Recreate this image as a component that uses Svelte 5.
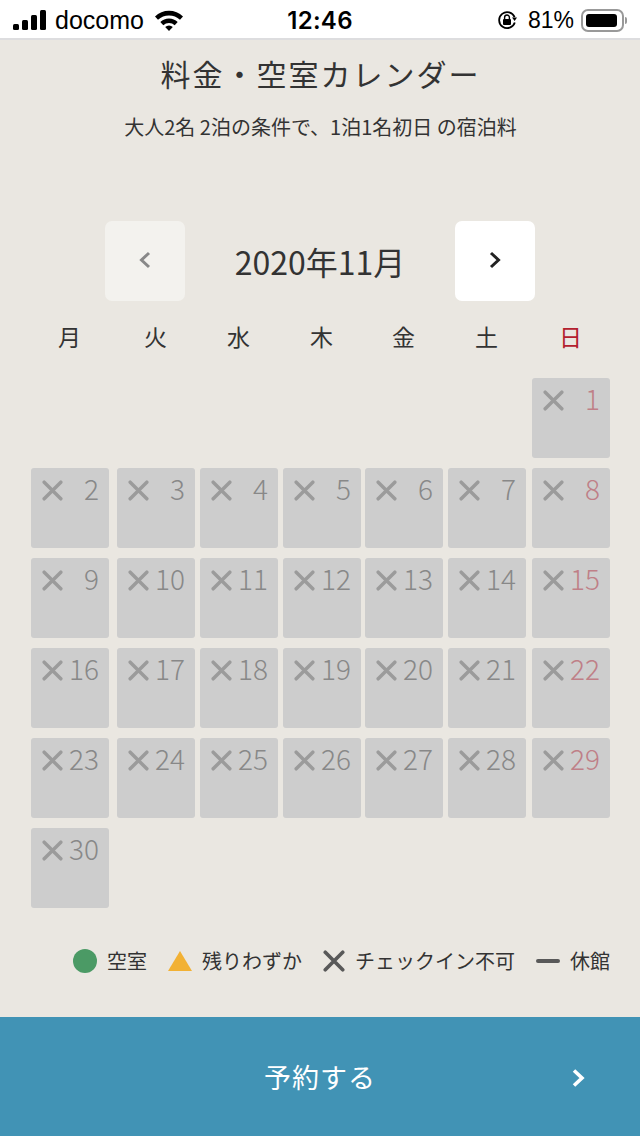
<script>
	const weekdays = ['月', '火', '水', '木', '金', '土', '日']
	const days = Array.from({ length: 30 }, (_, i) => i + 1)
</script>

{#snippet cross(size, color)}
	<svg class="cross" width={size} height={size} viewBox="0 0 24 24">
		<path d="M2.5 2.5 L21.5 21.5 M21.5 2.5 L2.5 21.5" fill="none" stroke={color} stroke-width="4" stroke-linecap="round" />
	</svg>
{/snippet}

{#snippet chevron(color, width, d = 'M3 2.5 L11 10 L3 17.5')}
	<svg width="14" height="20" viewBox="0 0 14 20">
		<path {d} fill="none" stroke={color} stroke-width={width} />
	</svg>
{/snippet}

<div class="page">
	<header class="status">
		<div class="status-left">
			<svg width="35" height="20" viewBox="0 0 35 20">
				<rect x="0" y="14" width="6" height="6" rx="1.5" fill="#000" />
				<rect x="9" y="10" width="6" height="10" rx="1.5" fill="#000" />
				<rect x="18" y="5" width="6" height="15" rx="1.5" fill="#000" />
				<rect x="27" y="0" width="6" height="20" rx="1.5" fill="#000" />
			</svg>
			<span class="carrier">docomo</span>
			<svg class="wifi" width="30" height="22" viewBox="0 0 30 22">
				<path d="M1 7.5 A20 20 0 0 1 29 7.5 L26 10.8 A16 16 0 0 0 4 10.8 Z" fill="#000" />
				<path d="M6.3 13 A12.5 12.5 0 0 1 23.7 13 L20.7 16.2 A8.3 8.3 0 0 0 9.3 16.2 Z" fill="#000" />
				<path d="M11.2 18 A5.5 5.5 0 0 1 18.8 18 L15 22 Z" fill="#000" />
			</svg>
		</div>
		<div class="time">12:46</div>
		<div class="status-right">
			<svg width="20" height="20" viewBox="0 0 20 20">
				<path d="M17.6 7.2 A8 8 0 1 0 17.8 12.5" fill="none" stroke="#000" stroke-width="1.8" />
				<path d="M15 7.5 L20 7.5 L17.6 11 Z" fill="#000" />
				<rect x="6" y="9" width="8" height="6" rx="1" fill="#000" />
				<path d="M7.6 9 V7.4 a2.4 2.4 0 0 1 4.8 0 V9" fill="none" stroke="#000" stroke-width="1.4" />
			</svg>
			<span class="percent">81%</span>
			<div class="battery"><div class="battery-fill"></div></div>
			<div class="battery-tip"></div>
		</div>
	</header>

	<main class="main">
		<h1 class="title">料金・空室カレンダー</h1>
		<p class="subtitle">大人2名 2泊の条件で、1泊1名初日 の宿泊料</p>

		<div class="month-nav">
			<button class="nav-btn prev">{@render chevron('#888888', 3, 'M11 3 L3.5 10 L11 17')}</button>
			<div class="month">2020年11月</div>
			<button class="nav-btn next">{@render chevron('#222222', 3, 'M3 3 L10.5 10 L3 17')}</button>
		</div>

		<div class="grid weekdays">
			{#each weekdays as day, i}
				<div class="weekday" class:sun={i === 6}>{day}</div>
			{/each}
		</div>

		<div class="grid calendar">
			{#each Array(6) as _}
				<div></div>
			{/each}
			{#each days as day}
				<div class="cell">
					{@render cross(21, '#9b9b9b')}
					<span class="num" class:sun={day % 7 === 1}>{day}</span>
				</div>
			{/each}
		</div>

		<div class="legend">
			<div class="legend-item">
				<span class="dot"></span>
				<span>空室</span>
			</div>
			<div class="legend-item">
				<svg width="24" height="20" viewBox="0 0 24 20"><path d="M12 0 L24 20 L0 20 Z" fill="#f2b134" /></svg>
				<span>残りわずか</span>
			</div>
			<div class="legend-item">
				{@render cross(22, '#595959')}
				<span>チェックイン不可</span>
			</div>
			<div class="legend-item">
				<span class="dash"></span>
				<span>休館</span>
			</div>
		</div>
	</main>

	<button class="reserve">
		<span>予約する</span>
		<span class="reserve-icon">{@render chevron('#ffffff', 3.6)}</span>
	</button>
</div>

<style>
	:global(body) {
		margin: 0;
		background: #eae7e1;
	}

	.page {
		display: flex;
		flex-direction: column;
		height: 1136px;
		overflow: hidden;
		font-family: 'Noto Sans CJK JP', 'Noto Sans', sans-serif;
		color: #2b2b2b;
	}

	.status {
		box-sizing: border-box;
		display: grid;
		grid-template-columns: 1fr auto 1fr;
		align-items: center;
		height: 40px;
		padding: 2px 13px 0;
		background: #fff;
		border-bottom: 2px solid #dddddf;
		font-family: 'Inter', 'Liberation Sans', sans-serif;
		color: #000;
	}

	.status-left,
	.status-right {
		display: flex;
		align-items: center;
	}

	.status-right {
		justify-content: flex-end;
	}

	.carrier {
		margin-left: 7px;
		font-size: 25px;
		font-family: 'Liberation Sans', sans-serif;
	}

	.wifi {
		margin-left: 10px;
	}

	.time {
		font-size: 24px;
		font-weight: 600;
		letter-spacing: 0.3px;
	}

	.percent {
		margin-left: 11px;
		font-size: 23px;
		font-family: 'Liberation Sans', sans-serif;
	}

	.battery {
		box-sizing: border-box;
		width: 43px;
		height: 23px;
		margin-left: 7px;
		padding: 3px;
		border: 2px solid #999;
		border-radius: 7px;
	}

	.battery-fill {
		width: 31px;
		height: 13px;
		background: #000;
		border-radius: 3px;
	}

	.battery-tip {
		width: 2px;
		height: 7px;
		margin-left: 1px;
		background: #999;
		border-radius: 0 2px 2px 0;
	}

	.main {
		flex: 1;
		box-sizing: border-box;
		padding: 0 30px 0 31px;
	}

	.title {
		margin: 10px 0 0;
		font-size: 30px;
		font-weight: 400;
		line-height: 46px;
		letter-spacing: 2px;
		text-align: center;
		color: #333;
	}

	.subtitle {
		margin: 17px 0 0;
		font-size: 20px;
		line-height: 28px;
		text-align: center;
		color: #333;
	}

	.month-nav {
		display: flex;
		align-items: center;
		justify-content: space-between;
		width: 430px;
		margin: 80px 0 0 74px;
	}

	.nav-btn {
		display: flex;
		align-items: center;
		justify-content: center;
		width: 80px;
		height: 80px;
		padding: 0 0 2px;
		border: 0;
		border-radius: 7px;
	}

	.nav-btn.prev {
		background: #f3f2ee;
	}

	.nav-btn.next {
		background: #fff;
	}

	.month {
		font-size: 32px;
		line-height: 80px;
		color: #333;
	}

	.grid {
		display: grid;
		grid-template-columns: 86px 83px 83px 82px 83px 84px 78px;
	}

	.weekdays {
		margin-top: 13px;
	}

	.weekday {
		width: 77px;
		font-size: 23px;
		line-height: 44px;
		text-align: center;
		color: #333;
	}

	.weekday.sun {
		color: #b3202e;
	}

	.calendar {
		grid-auto-rows: 80px;
		row-gap: 10px;
		margin-top: 20px;
	}

	.cell {
		display: flex;
		align-items: flex-start;
		justify-content: space-between;
		box-sizing: border-box;
		width: 78px;
		height: 80px;
		padding: 12px 10px 0 11px;
		background: #cdcdcd;
		border-radius: 3px;
	}

	.cell .cross {
		flex: none;
	}

	.num {
		font-size: 28px;
		font-weight: 300;
		line-height: 16px;
		color: #888;
	}

	.num.sun {
		color: #bf7f87;
	}

	.legend {
		display: flex;
		justify-content: flex-end;
		align-items: center;
		gap: 21px;
		margin-top: 37px;
		font-size: 20px;
		line-height: 32px;
		color: #333;
	}

	.legend-item {
		display: flex;
		align-items: center;
		gap: 10px;
	}

	.dot {
		width: 24px;
		height: 24px;
		border-radius: 50%;
		background: #4b9a65;
	}

	.dash {
		width: 24px;
		height: 4px;
		border-radius: 2px;
		background: #595959;
	}

	.reserve {
		position: relative;
		flex: none;
		height: 119px;
		padding: 0;
		border: 0;
		background: #4193b5;
		color: #fff;
		font-family: inherit;
		font-size: 27px;
		letter-spacing: 1px;
	}

	.reserve-icon {
		position: absolute;
		right: 55px;
		top: 51px;
		display: flex;
	}
</style>
